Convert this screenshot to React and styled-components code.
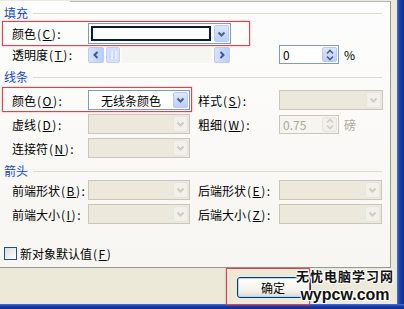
import styled, { createGlobalStyle } from "styled-components";

const GlobalStyle = createGlobalStyle`
html, body {
    margin: 0;
    padding: 0;
}
body {
    background: #ece9d8;
    font-family: "Noto Sans CJK SC", "Liberation Sans", sans-serif;
    font-size: 12px;
    color: #000;
}
`;

const Chevron = ({ dir = 'down', color = '#4d6185' }) => {
    const d = {
        down: 'M1.5 1.5 L4.5 4.5 L7.5 1.5',
        left: 'M4.5 1 L1.5 4 L4.5 7',
        right: 'M1.5 1 L4.5 4 L1.5 7',
    }[dir];
    const box = dir === 'down' ? '0 0 9 6' : '0 0 6 8';
    return (
        <svg viewBox={box} width={dir === 'down' ? 9 : 6} height={dir === 'down' ? 6 : 8}>
            <path d={d} fill="none" stroke={color} strokeWidth="2" />
        </svg>
    );
};

const SpinArrows = ({ color }) => (
    <svg viewBox="0 0 8 12" width="8" height="12">
        <path d="M1 4.5 L4 1.5 L7 4.5 M1 7.5 L4 10.5 L7 7.5" fill="none" stroke={color} strokeWidth="1.6" />
    </svg>
);

// "(C):" part of a label, access key underlined
const Hint = ({ k, colon = true }) => (
    <HintText>(<Key>{k}</Key>){colon ? ':' : ''}</HintText>
);

const App = () => {
    return (
        <Screen>
            <GlobalStyle />
            <Body>
                <Content>
                    <Panel>
                        <Header>填充</Header>
                        <Row $h={21} $mt={3}>
                            <Mark style={{ top: -2, left: 2, width: 248, height: 25 }} />
                            <Label>颜色<Hint k="C" /></Label>
                            <Combo $w={143} $h={21}>
                                <Swatch />
                                <DropBtn><Chevron /></DropBtn>
                            </Combo>
                        </Row>
                        <Row $h={19} $mt={1}>
                            <Label>透明度<Hint k="T" /></Label>
                            <Scroll>
                                <ScrollBtn><Chevron dir="left" color="#3b55a0" /></ScrollBtn>
                                <Thumb />
                                <Track />
                                <ScrollBtn><Chevron dir="right" color="#3b55a0" /></ScrollBtn>
                            </Scroll>
                            <Spinner $ml={49}>
                                <SpinText>0</SpinText>
                                <SpinBtn><SpinArrows color="#4d6185" /></SpinBtn>
                            </Spinner>
                            <Unit>%</Unit>
                        </Row>

                        <Header $mt={4}>线条</Header>
                        <Group $mt={6}>
                            <Row $h={20}>
                                <Mark style={{ top: -3, left: 2, width: 190, height: 25 }} />
                                <Label>颜色<Hint k="O" /></Label>
                                <Combo $w={102}>
                                    <ComboText>无线条颜色</ComboText>
                                    <DropBtn><Chevron /></DropBtn>
                                </Combo>
                                <Label2>样式<Hint k="S" /></Label2>
                                <Combo $w={104} $off>
                                    <ComboText />
                                    <DropBtn $off><Chevron color="#cfcdc2" /></DropBtn>
                                </Combo>
                            </Row>
                            <Row $h={20}>
                                <Label>虚线<Hint k="D" /></Label>
                                <Combo $w={102} $off>
                                    <ComboText />
                                    <DropBtn $off><Chevron color="#cfcdc2" /></DropBtn>
                                </Combo>
                                <Label2>粗细<Hint k="W" /></Label2>
                                <Spinner $off>
                                    <SpinText $off>0.75</SpinText>
                                    <SpinBtn $off><SpinArrows color="#cfcdc2" /></SpinBtn>
                                </Spinner>
                                <Unit $off>磅</Unit>
                            </Row>
                            <Row $h={20}>
                                <Label>连接符<Hint k="N" /></Label>
                                <Combo $w={102} $off>
                                    <ComboText />
                                    <DropBtn $off><Chevron color="#cfcdc2" /></DropBtn>
                                </Combo>
                            </Row>
                        </Group>

                        <Header $mt={4}>箭头</Header>
                        <Group $mt={2}>
                            <Row $h={20}>
                                <Label>前端形状<Hint k="B" /></Label>
                                <Combo $w={102} $off>
                                    <ComboText />
                                    <DropBtn $off><Chevron color="#cfcdc2" /></DropBtn>
                                </Combo>
                                <Label2>后端形状<Hint k="E" /></Label2>
                                <Combo $w={103} $off>
                                    <ComboText />
                                    <DropBtn $off><Chevron color="#cfcdc2" /></DropBtn>
                                </Combo>
                            </Row>
                            <Row $h={20}>
                                <Label>前端大小<Hint k="I" /></Label>
                                <Combo $w={102} $off>
                                    <ComboText />
                                    <DropBtn $off><Chevron color="#cfcdc2" /></DropBtn>
                                </Combo>
                                <Label2>后端大小<Hint k="Z" /></Label2>
                                <Combo $w={103} $off>
                                    <ComboText />
                                    <DropBtn $off><Chevron color="#cfcdc2" /></DropBtn>
                                </Combo>
                            </Row>
                        </Group>

                        <CheckRow>
                            <CheckBox />
                            <span>新对象默认值<Hint k="F" colon={false} /></span>
                        </CheckRow>
                    </Panel>
                    <Footer>
                        <Mark style={{ top: 0, left: 226, width: 84, height: 37 }} />
                        <OkButton>确定</OkButton>
                        <Watermark>
                            <WmTitle>无忧电脑学习网</WmTitle>
                            <WmSite>wypcw.com</WmSite>
                        </Watermark>
                    </Footer>
                </Content>
                <FrameRight />
            </Body>
            <FrameBottom />
        </Screen>
    );
};

export default App;

const Screen = styled.div`
width: 404px;
height: 309px;
display: flex;
flex-direction: column;
overflow: hidden;
background: #ece9d8;
`;
const Body = styled.div`
flex: 1;
display: flex;
min-height: 0;
`;
const Content = styled.div`
width: 397px;
display: flex;
flex-direction: column;
`;
const FrameRight = styled.div`
width: 7px;
background: linear-gradient(90deg, #4a6fd6, #1a3fae 40%, #0c2a8a);
`;
const FrameBottom = styled.div`
height: 5px;
background: linear-gradient(#4a6fd6, #163aa6 50%, #0c2a8a);
`;

const Panel = styled.div`
position: relative;
margin-top: 1px;
width: 391px;
height: 267px;
box-sizing: border-box;
border-right: 1px solid #919b9c;
border-bottom: 1px solid #919b9c;
padding-top: 1px;
background: linear-gradient(#fdfdfd, #f7f6f2);
display: flex;
flex-direction: column;

&::before {
    content: '';
    position: absolute;
    top: 0;
    left: 70px;
    right: 0;
    height: 1px;
    background: #b5b8b8;
}
`;

const Header = styled.div`
margin-top: ${p => p.$mt ?? 2}px;
height: 16px;
display: flex;
align-items: center;
padding-left: 4px;
padding-right: 8px;
color: #1549c1;
font-size: 12px;

&::after {
    content: '';
    flex: 1;
    height: 1px;
    margin-left: 5px;
    margin-top: 2px;
    background: #dcdad0;
}
`;

const Group = styled.div`
margin-top: ${p => p.$mt}px;
display: flex;
flex-direction: column;
gap: 4px;
`;

const Row = styled.div`
position: relative;
margin-top: ${p => p.$mt ?? 0}px;
height: ${p => p.$h}px;
display: flex;
align-items: center;
`;

const Label = styled.div`
width: 76px;
padding-left: 12px;
white-space: nowrap;
font-size: 12px;
`;
const Label2 = styled.div`
width: 81px;
padding-left: 8px;
white-space: nowrap;
font-size: 12px;
`;
const HintText = styled.span`
margin-left: 1px;
letter-spacing: 1.5px;
`;
const Key = styled.span`
text-decoration: underline;
`;

const Mark = styled.div`
position: absolute;
box-sizing: border-box;
border: 1px solid #d9454f;
box-shadow: 0 0 2px rgba(220, 60, 70, 0.45);
pointer-events: none;
`;

const Combo = styled.div`
width: ${p => p.$w}px;
height: ${p => p.$h ?? 20}px;
box-sizing: border-box;
border: 1px solid ${p => p.$off ? '#c9c7ba' : '#7f9db9'};
background: ${p => p.$off ? '#ece9dc' : '#fff'};
display: flex;
padding: 1px;
gap: 1px;
`;
const ComboText = styled.div`
flex: 1;
display: flex;
align-items: center;
padding-left: 11px;
font-size: 12px;
`;
const Swatch = styled.div`
flex: 1;
margin: 1px 2px 1px 1px;
border: 2px solid #0d1b33;
background: #fff;
`;
const DropBtn = styled.div`
width: 15px;
box-sizing: border-box;
border-radius: 2px;
border: 1px solid ${p => p.$off ? '#e8e6dc' : '#b9cbf3'};
background: ${p => p.$off ? '#f1f0ea' : 'linear-gradient(#dde7fd, #bccffa)'};
display: flex;
align-items: center;
justify-content: center;
`;

const Scroll = styled.div`
width: 142px;
height: 16px;
display: flex;
gap: 2px;
`;
const ScrollBtn = styled.div`
width: 16px;
box-sizing: border-box;
border-radius: 2px;
border: 1px solid #b9cbf3;
background: linear-gradient(90deg, #d7e3fd, #b9cdf9);
display: flex;
align-items: center;
justify-content: center;
`;
const Thumb = styled.div`
width: 14px;
box-sizing: border-box;
border-radius: 2px;
border: 1px solid #c3d2f4;
background: repeating-linear-gradient(90deg, #cbd9fb 0 2px, #e6edfd 2px 4px);
background-size: 8px 8px;
background-position: center;
background-repeat: no-repeat;
background-color: #d5e1fc;
`;
const Track = styled.div`
flex: 1;
background: #f5f5f1;
`;

const Spinner = styled.div`
margin-left: ${p => p.$ml ?? 0}px;
width: 60px;
height: 19px;
box-sizing: border-box;
border: 1px solid ${p => p.$off ? '#c9c7ba' : '#7f9db9'};
background: ${p => p.$off ? '#f6f5f0' : '#fff'};
display: flex;
padding: 1px;
`;
const SpinText = styled.div`
flex: 1;
display: flex;
align-items: center;
padding-left: 2px;
font-size: 12px;
color: ${p => p.$off ? '#aca899' : '#000'};
`;
const SpinBtn = styled.div`
width: 15px;
box-sizing: border-box;
border-radius: 2px;
border: 1px solid ${p => p.$off ? '#e8e6dc' : '#b9cbf3'};
background: ${p => p.$off ? '#f1f0ea' : 'linear-gradient(#dde7fd, #bccffa)'};
display: flex;
align-items: center;
justify-content: center;
`;
const Unit = styled.div`
margin-left: 5px;
font-size: 12px;
color: ${p => p.$off ? '#aca899' : '#000'};
`;

const CheckRow = styled.div`
margin-top: 22px;
height: 14px;
padding-left: 4px;
display: flex;
align-items: center;
gap: 3px;
font-size: 12px;
`;
const CheckBox = styled.div`
width: 13px;
height: 13px;
box-sizing: border-box;
border: 1px solid #1c5180;
background: linear-gradient(135deg, #dcdcd7, #fff);
`;

const Footer = styled.div`
position: relative;
flex: 1;
padding-top: 9px;
padding-left: 237px;
box-sizing: border-box;
`;
const OkButton = styled.div`
width: 74px;
height: 21px;
box-sizing: border-box;
border: 1px solid #003c74;
border-radius: 3px;
background: linear-gradient(#ffffff, #f2f1ec 70%, #dcd8cc);
box-shadow: inset 0 0 0 1px #bcd2f6;
display: flex;
align-items: center;
justify-content: center;
font-size: 12px;
padding-right: 2px;
`;
const Watermark = styled.div`
position: absolute;
right: 3px;
top: 1px;
display: flex;
flex-direction: column;
align-items: center;
gap: 5px;
color: #111;
text-shadow: 1px 1px 0 #fff, -1px -1px 0 #fff, 1px -1px 0 #fff, -1px 1px 0 #fff, 0 1px 0 #fff, 1px 0 0 #fff;
`;
const WmTitle = styled.div`
font-family: "Noto Sans CJK SC", sans-serif;
font-weight: 700;
font-size: 13px;
letter-spacing: 1px;
line-height: 14px;
height: 14px;
`;
const WmSite = styled.div`
font-family: "Liberation Sans", Arial, sans-serif;
font-weight: 700;
font-size: 16px;
line-height: 14px;
height: 14px;
`;
